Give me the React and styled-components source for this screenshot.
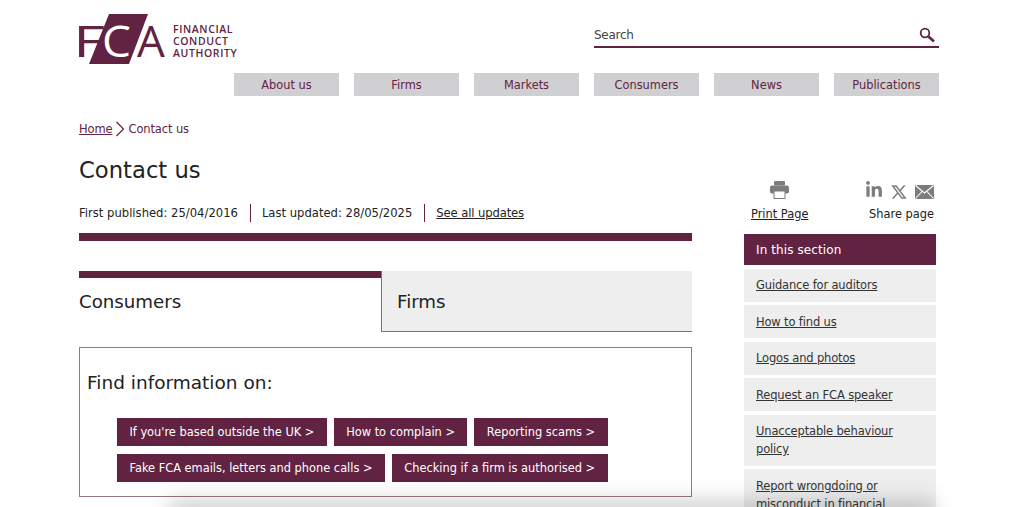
import React from "react"
import styled, { createGlobalStyle } from "styled-components"
import { FaLinkedinIn } from "react-icons/fa"
import { RiTwitterXLine } from "react-icons/ri"

const plum = "#622342"

const GlobalStyle = createGlobalStyle`
  html, body {
    margin: 0;
    height: 507px;
    overflow: hidden;
    background: #fff;
    font-family: "DejaVu Sans", Verdana, sans-serif;
    color: #222;
  }
  a { color: inherit; }
`
const Page = styled.div`
  position: relative;
  height: 507px;
  padding: 14px 85px 0 79px;
  box-sizing: border-box;
  overflow: hidden;
`
const Header = styled.header`
  display: flex;
  justify-content: space-between;
  height: 51px;
`
const Logo = styled.svg`
  width: 168px;
  height: 64px;
  margin: -6px 0 0 -6px;
  display: block;
`
const SearchBar = styled.div`
  width: 345px;
  height: 34px;
  box-sizing: border-box;
  border-bottom: 2px solid ${plum};
  display: flex;
  justify-content: space-between;
  align-items: center;
  padding: 10px 4px 0 0;
  font-size: 12px;
  letter-spacing: -0.25px;
  color: #444;
`
const Nav = styled.nav`
  display: flex;
  justify-content: flex-end;
  gap: 15px;
  margin-top: 8px;
`
const NavItem = styled.a`
  width: 105px;
  height: 23px;
  background: #d0d0d2;
  color: ${plum};
  font-size: 11.4px;
  display: flex;
  align-items: center;
  justify-content: center;
`
const Crumbs = styled.div`
  display: flex;
  align-items: center;
  gap: 3px;
  margin-top: 25px;
  height: 16px;
  font-size: 11.5px;
  letter-spacing: -0.12px;
  color: ${plum};
`
const Columns = styled.div`
  display: flex;
  gap: 52px;
`
const Main = styled.main`
  width: 613px;
  flex: none;
`
const Title = styled.h1`
  margin: 17px 0 0;
  font-size: 22.7px;
  line-height: 32px;
  font-weight: 400;
`
const Meta = styled.div`
  display: flex;
  align-items: center;
  margin-top: 18px;
  font-size: 11.6px;
  height: 18px;
`
const MetaPart = styled.span`
  padding: 0 12px 0 11px;
  line-height: 18px;
  border-left: 1px solid ${plum};
  &:first-child {
    padding-left: 0;
    border-left: 0;
  }
  a {
    letter-spacing: -0.12px;
  }
`
const Rule = styled.div`
  height: 8px;
  background: ${plum};
  margin-top: 11px;
`
const Tabs = styled.div`
  display: flex;
  margin-top: 30px;
  height: 61px;
`
const Tab = styled.div`
  box-sizing: border-box;
  font-size: 18.2px;
  display: flex;
  align-items: center;
  ${p =>
    p.$active
      ? `width: 302px; border-top: 7px solid ${plum}; padding-bottom: 7px; background: #fff;`
      : `flex: 1; background: #eee; border-left: 1px solid #8d6a7d; border-bottom: 1px solid #8d6a7d; padding-left: 15px;`}
`
const Panel = styled.section`
  margin-top: 15px;
  height: 150px;
  box-sizing: border-box;
  border: 1px solid #9a7488;
  padding: 23px 7px 0;
`
const PanelTitle = styled.h2`
  margin: 0;
  font-size: 18.5px;
  line-height: 24px;
  font-weight: 400;
`
const ButtonGrid = styled.div`
  display: flex;
  flex-direction: column;
  gap: 8.5px;
  margin: 23px 0 0 30px;
`
const ButtonRow = styled.div`
  display: flex;
  gap: 7px;
`
const LinkButton = styled.a`
  height: 27.5px;
  padding: 0 12.4px;
  display: flex;
  align-items: center;
  background: ${plum};
  color: #fff;
  font-size: 11.4px;
  white-space: nowrap;
`
const Side = styled.aside`
  width: 192px;
  flex: none;
`
const Tools = styled.div`
  display: flex;
  justify-content: space-between;
  width: 190px;
  margin-top: 44px;
  height: 53px;
  padding-left: 7px;
  box-sizing: border-box;
  text-align: center;
  font-size: 11.4px;
`
const ToolBlock = styled.div`
  display: flex;
  flex-direction: column;
  align-items: ${p => (p.$end ? "flex-end" : "center")};
  gap: 6px;
`
const IconRow = styled.div`
  display: flex;
  align-items: flex-start;
  gap: ${p => p.$gap || 0}px;
  height: 20px;
  color: #7c7c7c;
`
const IconSlot = styled.span`
  display: block;
  line-height: 0;
  margin-top: ${p => p.$top || 0}px;
`
const SectionHead = styled.div`
  height: 31px;
  background: ${plum};
  color: #fff;
  font-size: 12px;
  letter-spacing: 0.1px;
  display: flex;
  align-items: center;
  padding-left: 12px;
`
const SideList = styled.div`
  display: flex;
  flex-direction: column;
  gap: 3.5px;
  margin-top: 3.5px;
`
const SideItem = styled.a`
  display: block;
  background: #eee;
  color: #333;
  font-size: 11.5px;
  letter-spacing: -0.16px;
  line-height: 18px;
  padding: 7.5px 12px;
  text-decoration: underline;
`
const BottomShadow = styled.div`
  position: absolute;
  left: 175px;
  right: 95px;
  bottom: -14px;
  height: 14px;
  box-shadow: 0 0 22px 6px rgba(0, 0, 0, 0.2);
  pointer-events: none;
`

const sideLinks = [
  "Guidance for auditors",
  "How to find us",
  "Logos and photos",
  "Request an FCA speaker",
  "Unacceptable behaviour policy",
  "Report wrongdoing or misconduct in financial",
]
const navLinks = ["About us", "Firms", "Markets", "Consumers", "News", "Publications"]
const buttonRows = [
  ["If you're based outside the UK >", "How to complain >", "Reporting scams >"],
  ["Fake FCA emails, letters and phone calls >", "Checking if a firm is authorised >"],
]

const FcaLogo = () => (
  <Logo viewBox="-6 -6 168 64">
    <polygon points="30,0 69,0 50,50 10,50" fill={plum} />
    <g fontFamily="'Open Sans', sans-serif" fontSize="44" fontWeight="400">
      <text x="-6" y="43" fill={plum} textLength="32" lengthAdjust="spacingAndGlyphs">F</text>
      <text x="23" y="43" fill="#fff" textLength="29" lengthAdjust="spacingAndGlyphs">C</text>
      <text x="58" y="43" fill={plum}>A</text>
    </g>
    <g fontFamily="'Open Sans', sans-serif" fontSize="10.5" fontWeight="600" fill={plum} letterSpacing="0.6">
      <text x="94" y="19">FINANCIAL</text>
      <text x="94" y="31">CONDUCT</text>
      <text x="94" y="43">AUTHORITY</text>
    </g>
  </Logo>
)

const SearchIcon = () => (
  <svg width="16" height="16" viewBox="0 0 16 16" fill="none" stroke={plum}>
    <circle cx="6" cy="6" r="4.3" strokeWidth="1.8" />
    <path d="M9.5 9.5 L15 14.5" strokeWidth="2.6" />
  </svg>
)

const PrintIcon = () => (
  <svg width="19" height="18" viewBox="0 0 19 18" fill="#7c7c7c">
    <rect x="4" y="0" width="11" height="4.5" rx="1" />
    <rect x="0" y="4.5" width="19" height="8" rx="2" />
    <rect x="4" y="10" width="11" height="7.5" fill="#fff" stroke="#7c7c7c" />
  </svg>
)

const MailIcon = () => (
  <svg width="19" height="14" viewBox="0 0 19 14">
    <rect width="19" height="14" fill="#7c7c7c" />
    <path d="M0.5 0.5 L9.5 8 L18.5 0.5 M0.5 13.5 L7 6.5 M18.5 13.5 L12 6.5" fill="none" stroke="#fff" strokeWidth="1.1" />
  </svg>
)

const App = () => (
  <Page>
    <GlobalStyle />
    <Header>
      <FcaLogo />
      <SearchBar>
        Search
        <SearchIcon />
      </SearchBar>
    </Header>
    <Nav>
      {navLinks.map(n => (
        <NavItem key={n}>{n}</NavItem>
      ))}
    </Nav>
    <Crumbs>
      <a href="#home">Home</a>
      <svg width="10" height="16" viewBox="0 0 10 16" fill="none" stroke={plum} strokeWidth="1.2">
        <path d="M1.5 1 L8.5 8 L1.5 15" />
      </svg>
      Contact us
    </Crumbs>
    <Columns>
      <Main>
        <Title>Contact us</Title>
        <Meta>
          <MetaPart>First published: 25/04/2016</MetaPart>
          <MetaPart>Last updated: 28/05/2025</MetaPart>
          <MetaPart>
            <a href="#updates">See all updates</a>
          </MetaPart>
        </Meta>
        <Rule />
        <Tabs>
          <Tab $active>Consumers</Tab>
          <Tab>Firms</Tab>
        </Tabs>
        <Panel>
          <PanelTitle>Find information on:</PanelTitle>
          <ButtonGrid>
            {buttonRows.map((row, i) => (
              <ButtonRow key={i}>
                {row.map(b => (
                  <LinkButton key={b}>{b}</LinkButton>
                ))}
              </ButtonRow>
            ))}
          </ButtonGrid>
        </Panel>
      </Main>
      <Side>
        <Tools>
          <ToolBlock>
            <IconRow>
              <PrintIcon />
            </IconRow>
            <a href="#print">Print Page</a>
          </ToolBlock>
          <ToolBlock $end>
            <IconRow $gap={7}>
              <IconSlot>
                <FaLinkedinIn size={18} />
              </IconSlot>
              <IconSlot $top={2}>
                <RiTwitterXLine size={18} />
              </IconSlot>
              <IconSlot $top={4}>
                <MailIcon />
              </IconSlot>
            </IconRow>
            Share page
          </ToolBlock>
        </Tools>
        <SectionHead>In this section</SectionHead>
        <SideList>
          {sideLinks.map(s => (
            <SideItem key={s}>{s}</SideItem>
          ))}
        </SideList>
      </Side>
    </Columns>
    <BottomShadow />
  </Page>
)

export default App
